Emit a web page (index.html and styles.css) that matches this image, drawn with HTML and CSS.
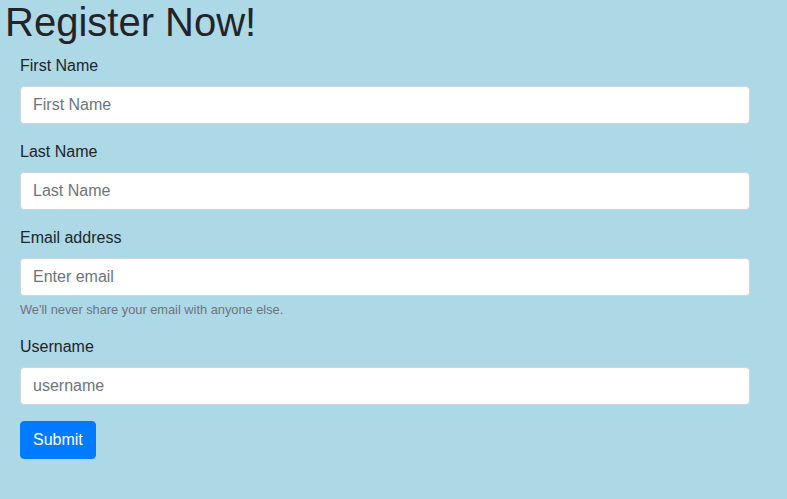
FILE: index.html
```html
<!DOCTYPE html>
<html>
<head>
<meta charset="utf-8">
<link rel="stylesheet" href="styles.css">
</head>
<body>
<h1 class="title">Register Now!</h1>
<form class="form">
  <div class="group">
    <label class="label">First Name</label>
    <input class="input" type="text" placeholder="First Name">
  </div>
  <div class="group">
    <label class="label">Last Name</label>
    <input class="input" type="text" placeholder="Last Name">
  </div>
  <div class="group">
    <label class="label">Email address</label>
    <input class="input" type="email" placeholder="Enter email">
    <small class="help">We'll never share your email with anyone else.</small>
  </div>
  <div class="group">
    <label class="label">Username</label>
    <input class="input" type="text" placeholder="username">
  </div>
  <button class="btn" type="button">Submit</button>
</form>
</body>
</html>
```
FILE: styles.css
```css
html, body {
  margin: 0;
  padding: 0;
}
body {
  background: #add8e6;
  font-family: "Liberation Sans", Arial, sans-serif;
  font-size: 16px;
  line-height: 1.5;
  color: #212529;
}
.title {
  font-size: 40px;
  font-weight: 400;
  line-height: 48px;
  margin: -2px 0 8px;
  padding-left: 5px;
  color: #212529;
}
.form {
  width: 730px;
  padding-left: 20px;
}
.group {
  margin-bottom: 16px;
}
.label {
  display: block;
  margin-bottom: 8px;
  line-height: 24px;
}
.input {
  display: block;
  box-sizing: border-box;
  width: 100%;
  height: 38px;
  padding: 6px 12px;
  font-family: inherit;
  font-size: 16px;
  line-height: 24px;
  color: #495057;
  background: #fff;
  border: 1px solid #ced4da;
  border-radius: 4px;
  outline: none;
}
.input::placeholder {
  color: #6c757d;
  opacity: 1;
}
.help {
  display: block;
  margin-top: 4px;
  font-size: 12.8px;
  line-height: 19.2px;
  color: #6c757d;
}
.btn {
  display: block;
  height: 38px;
  padding: 6px 12px;
  font-family: inherit;
  font-size: 16px;
  line-height: 24px;
  color: #fff;
  background: #007bff;
  border: 1px solid #007bff;
  border-radius: 4px;
}
```
